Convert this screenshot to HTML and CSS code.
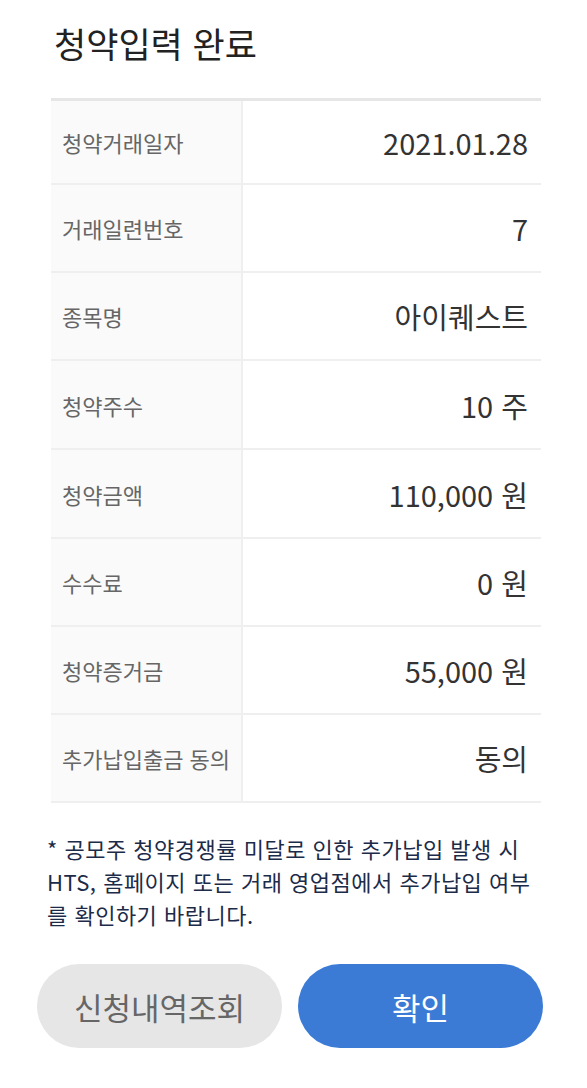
FILE: index.html
```html
<!DOCTYPE html>
<html lang="ko">

<head>
    <meta charset="UTF-8">
    <meta name="viewport" content="width=device-width, initial-scale=1.0">
    <title>청약입력 완료</title>

    <link rel="stylesheet" href="styles.css">
</head>

<body>
<div class="page-wrap">
    <h1 class="page-title">청약입력 완료</h1>

    <div class="result-table">
        <div class="row">
            <div class="label">청약거래일자</div>
            <div class="value">2021.01.28</div>
        </div>
        <div class="row">
            <div class="label">거래일련번호</div>
            <div class="value">7</div>
        </div>
        <div class="row">
            <div class="label">종목명</div>
            <div class="value">아이퀘스트</div>
        </div>
        <div class="row">
            <div class="label">청약주수</div>
            <div class="value">10 주</div>
        </div>
        <div class="row">
            <div class="label">청약금액</div>
            <div class="value">110,000 원</div>
        </div>
        <div class="row">
            <div class="label">수수료</div>
            <div class="value">0 원</div>
        </div>
        <div class="row">
            <div class="label">청약증거금</div>
            <div class="value">55,000 원</div>
        </div>
        <div class="row">
            <div class="label">추가납입출금 동의</div>
            <div class="value">동의</div>
        </div>
    </div>

    <p class="notice">* 공모주 청약경쟁률 미달로 인한 추가납입 발생 시 HTS, 홈페이지 또는 거래 영업점에서 추가납입 여부를 확인하기 바랍니다.</p>

    <div class="button-wrap">
        <button class="btn style-gray">신청내역조회</button>
        <button class="btn style-blue">확인</button>
    </div>
</div>
</body>

</html>
```

FILE: styles.css
```css
body {
    margin: 0;
    background-color: #fff;
    font-family: "Noto Sans CJK KR", "Noto Sans", sans-serif;
}

.page-wrap {
    width: 587px;
    padding-top: 18px;
}

.page-title {
    margin: 0 0 30px 54px;
    font-size: 35px;
    font-weight: 400;
    line-height: 50px;
    color: #222;
}

.result-table {
    margin: 0 46px 0 51px;
    border-top: 3px solid #e6e6e6;
}

.row {
    display: flex;
    height: 86px;
    border-bottom: 2px solid #efefef;
}

.row:first-child {
    height: 82px;
}

.row:nth-child(4),
.row:nth-child(5) {
    height: 87px;
}

.row .label {
    display: flex;
    align-items: center;
    width: 179px;
    padding-left: 11px;
    background-color: #fafafa;
    border-right: 2px solid #efefef;
    font-size: 22px;
    color: #666;
}

.row .value {
    display: flex;
    align-items: center;
    justify-content: flex-end;
    flex: 1;
    padding-right: 13px;
    font-size: 29px;
    color: #333;
}

.notice {
    margin: 29px 45px 0 47px;
    font-size: 22px;
    line-height: 33px;
    letter-spacing: 0.5px;
    color: #1c2b48;
}

.button-wrap {
    display: flex;
    gap: 16px;
    margin: 33px 0 0 37px;
}

.btn {
    width: 245px;
    height: 84px;
    border: none;
    border-radius: 42px;
    font-family: inherit;
    font-size: 31px;
}

.btn.style-gray {
    background-color: #e6e6e6;
    color: #666;
}

.btn.style-blue {
    background-color: #3b7bd6;
    color: #fff;
}
```
